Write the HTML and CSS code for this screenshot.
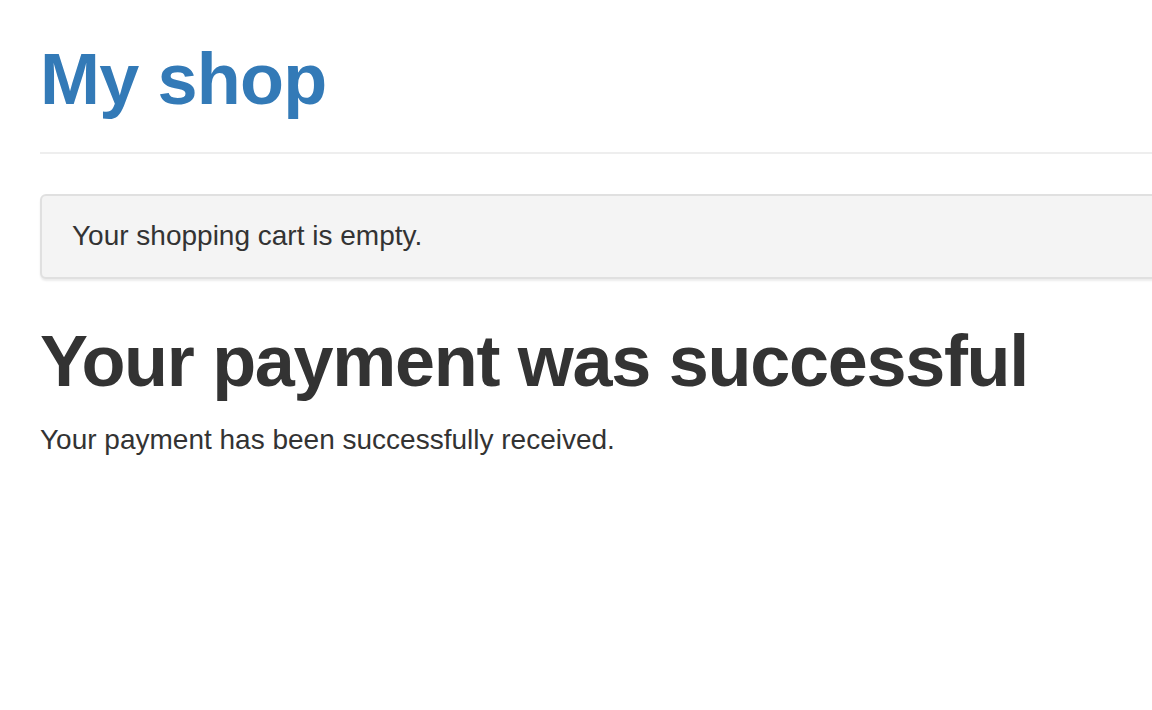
FILE: index.html
```html
<!DOCTYPE html>
<html lang="en">
<head>
  <meta charset="UTF-8" />
  <title>My shop</title>
  <link rel="stylesheet" href="styles.css">
</head>
<body>
  <div class="page">
    <div class="header">
      <a href="#" class="logo">My shop</a>
    </div>

    <div class="cart-box">
      Your shopping cart is empty.
    </div>

    <h1>Your payment was successful</h1>
    <p>Your payment has been successfully received.</p>
  </div>
</body>
</html>
```

FILE: styles.css
```css
* {
  box-sizing: border-box;
}

html, body {
  margin: 0;
  overflow: hidden;
}

body {
  font-family: "Liberation Sans", Arial, sans-serif;
  font-size: 28px;
  line-height: 1.43;
  color: #333;
  background: #fff;
}

.page {
  width: 1200px;
  padding-left: 40px;
}

.header {
  padding-top: 40px;
  padding-bottom: 33px;
  border-bottom: 2px solid #eee;
}

.logo {
  display: block;
  font-size: 72px;
  font-weight: bold;
  letter-spacing: -0.8px;
  line-height: 1.1;
  color: #337ab7;
  text-decoration: none;
}

.cart-box {
  margin-top: 40px;
  padding: 20px 30px 21px;
  background: #f4f4f4;
  border: 2px solid #e0e0e0;
  border-radius: 6px;
  box-shadow: 0 2px 2px rgba(0, 0, 0, 0.08);
}

h1 {
  margin: 43px 0 19px;
  font-size: 72px;
  font-weight: bold;
  letter-spacing: -1.3px;
  line-height: 1.1;
}

p {
  margin: 0;
}
```
